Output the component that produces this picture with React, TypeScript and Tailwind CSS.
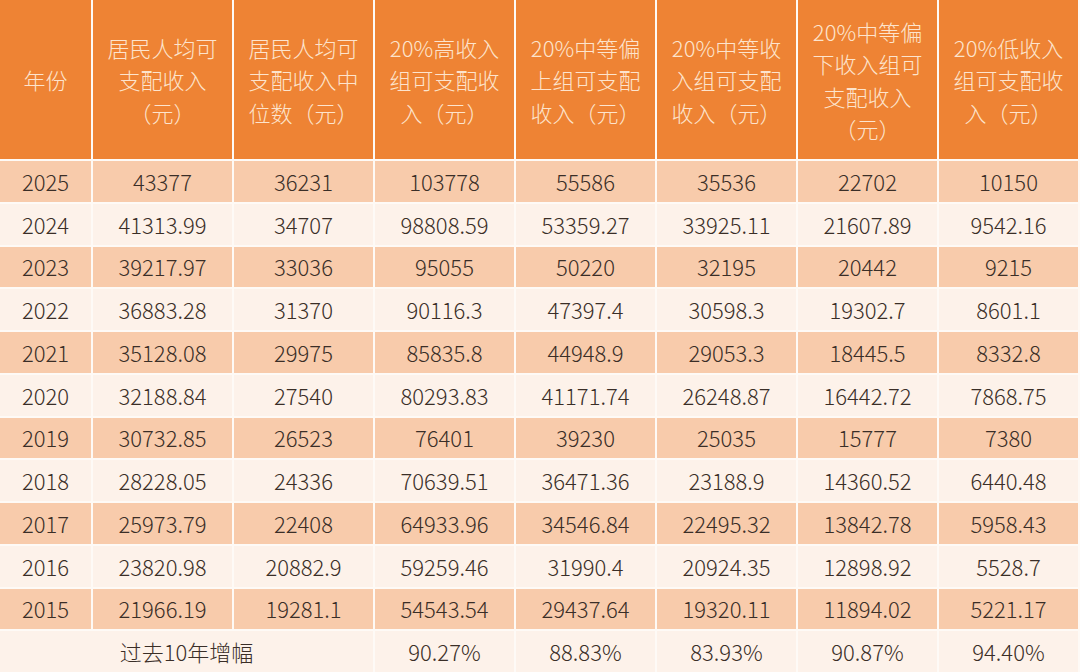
import React from "react";

const headers: string[][] = [
  ["年份"],
  ["居民人均可", "支配收入", "（元）"],
  ["居民人均可", "支配收入中", "位数（元）"],
  ["20%高收入", "组可支配收", "入（元）"],
  ["20%中等偏", "上组可支配", "收入（元）"],
  ["20%中等收", "入组可支配", "收入（元）"],
  ["20%中等偏", "下收入组可", "支配收入", "（元）"],
  ["20%低收入", "组可支配收", "入（元）"],
];

const rows: string[][] = [
  ["2025", "43377", "36231", "103778", "55586", "35536", "22702", "10150"],
  ["2024", "41313.99", "34707", "98808.59", "53359.27", "33925.11", "21607.89", "9542.16"],
  ["2023", "39217.97", "33036", "95055", "50220", "32195", "20442", "9215"],
  ["2022", "36883.28", "31370", "90116.3", "47397.4", "30598.3", "19302.7", "8601.1"],
  ["2021", "35128.08", "29975", "85835.8", "44948.9", "29053.3", "18445.5", "8332.8"],
  ["2020", "32188.84", "27540", "80293.83", "41171.74", "26248.87", "16442.72", "7868.75"],
  ["2019", "30732.85", "26523", "76401", "39230", "25035", "15777", "7380"],
  ["2018", "28228.05", "24336", "70639.51", "36471.36", "23188.9", "14360.52", "6440.48"],
  ["2017", "25973.79", "22408", "64933.96", "34546.84", "22495.32", "13842.78", "5958.43"],
  ["2016", "23820.98", "20882.9", "59259.46", "31990.4", "20924.35", "12898.92", "5528.7"],
  ["2015", "21966.19", "19281.1", "54543.54", "29437.64", "19320.11", "11894.02", "5221.17"],
];

const growth = ["90.27%", "88.83%", "83.93%", "90.87%", "94.40%"];

export default function App() {
  return (
    <div
      className="w-[1080px] h-[672px] bg-[#fefaf6] pr-[2px] overflow-hidden"
      style={{ fontFamily: '"Noto Sans CJK SC", "Noto Sans", sans-serif' }}
    >
      <div className="grid h-full grid-cols-[91px_repeat(7,1fr)] grid-rows-[159px_repeat(12,1fr)] gap-[2px] font-light text-[22px]">
        {headers.map((lines, i) => (
          <div
            key={i}
            className="flex flex-col items-center justify-center bg-[#ee8334] text-[#fde4cd] leading-[32.5px] text-center"
          >
            {lines.map((l, j) => (
              <span key={j} className="whitespace-nowrap">{l}</span>
            ))}
          </div>
        ))}

        {rows.map((r, ri) =>
          r.map((cell, ci) => (
            <div
              key={ri + "-" + ci}
              className={`flex items-center justify-center text-[#3a2e27] ${
                ri % 2 === 0 ? "bg-[#f8cbab]" : "bg-[#fdf2ea]"
              }`}
            >
              {cell}
            </div>
          ))
        )}

        <div className="col-span-3 flex items-center justify-center bg-[#fdf2ea] text-[#3a2e27]">
          过去10年增幅
        </div>
        {growth.map((g, i) => (
          <div key={i} className="flex items-center justify-center bg-[#fdf2ea] text-[#3a2e27]">
            {g}
          </div>
        ))}
      </div>
    </div>
  );
}
